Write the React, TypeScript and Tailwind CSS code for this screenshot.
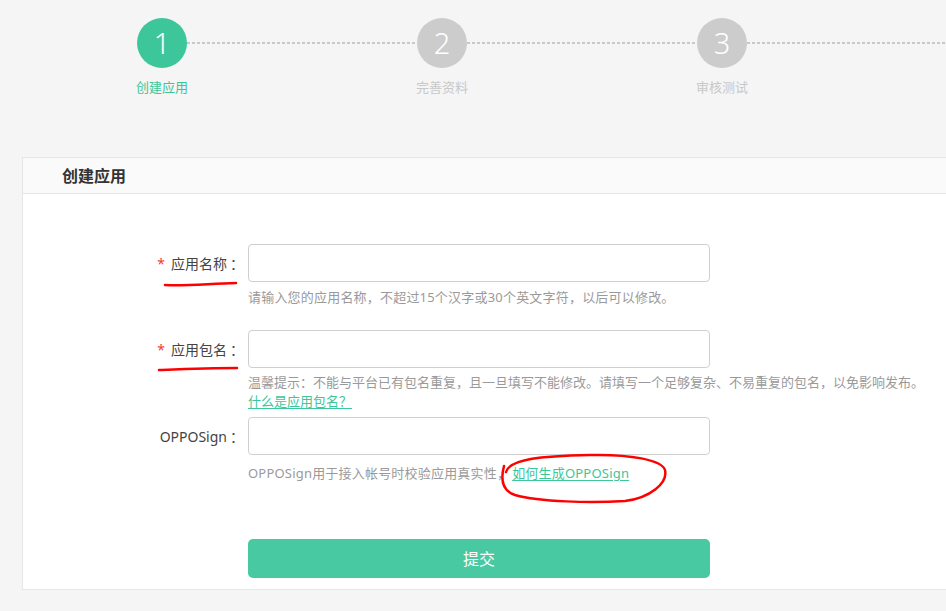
import React from "react";

const steps = [
  { n: "1", label: "创建应用", active: true },
  { n: "2", label: "完善资料", active: false },
  { n: "3", label: "审核测试", active: false },
];

const dash =
  "h-[2px] flex-1 bg-[repeating-linear-gradient(90deg,#c8c8c8_0px,#c8c8c8_3px,transparent_3px,transparent_5px)]";

function Steps() {
  return (
    <div className="flex h-[157px] pl-[22px] pt-[18px]">
      {steps.map((s, i) => (
        <div key={s.n} className="flex w-[280px] shrink-0 flex-col items-center">
          <div className="flex w-full items-center">
            <div className={i === 0 ? "h-[2px] flex-1" : dash} />
            <div
              className={`flex size-[50px] shrink-0 items-center justify-center rounded-full text-[29px] font-light text-white ${
                s.active ? "bg-[#3cc699]" : "bg-[#cccccc]"
              }`}
            >
              {s.n}
            </div>
            <div className={dash} />
          </div>
          <div
            className={`mt-[10px] text-[13px] leading-[18px] ${
              s.active ? "text-[#3cc699]" : "text-[#c8c8c8]"
            }`}
          >
            {s.label}
          </div>
        </div>
      ))}
      <div className="flex w-[280px] shrink-0 items-start">
        <div className={`${dash} mt-[24px]`} />
      </div>
    </div>
  );
}

function Field({
  label,
  required,
  children,
}: {
  label: string;
  required?: boolean;
  children?: React.ReactNode;
}) {
  return (
    <div className="flex">
      <div className="flex h-[38px] w-[225px] shrink-0 items-center justify-end pr-[4px] text-[14px] text-[#444]">
        {required && <span className="mr-[6px] text-[#f0402f]">*</span>}
        {label}
        <span className="ml-[3px]">：</span>
      </div>
      <div className="w-[462px] shrink-0">
        <input className="block h-[38px] w-full rounded-[4px] border border-[#cfcfcf] bg-white px-3 outline-none" />
        {children}
      </div>
    </div>
  );
}

export default function App() {
  return (
    <div className="relative h-[611px] overflow-hidden bg-[#f5f5f5] font-['Noto_Sans','Noto_Sans_CJK_SC',sans-serif]">
      <Steps />

      <div className="ml-[22px] w-[940px] border border-[#e6e6e6] bg-white">
        <div className="flex h-[36px] items-center border-b border-[#e6e6e6] bg-[#fafafa] pl-[39px] text-[16px] font-bold text-[#333]">
          创建应用
        </div>

        <div className="pb-[11px] pt-[50px]">
          <Field label="应用名称" required>
            <p className="mt-[5px] mb-[23px] text-[13px] leading-[20px] tracking-[0.2px] text-[#9a9a9a]">
              请输入您的应用名称，不超过15个汉字或30个英文字符，以后可以修改。
            </p>
          </Field>

          <Field label="应用包名" required>
            <p className="mt-[4px] whitespace-nowrap text-[13px] leading-[20px] text-[#9a9a9a]">
              温馨提示：不能与平台已有包名重复，且一旦填写不能修改。请填写一个足够复杂、不易重复的包名，以免影响发布。
            </p>
            <a className="mb-[6px] block text-[13px] leading-[19px] text-[#3cc699] underline underline-offset-2">
              什么是应用包名？
            </a>
          </Field>

          <Field label="OPPOSign">
            <p className="mt-[8px] whitespace-nowrap text-[13px] leading-[20px] tracking-[0.2px] text-[#9a9a9a]">
              OPPOSign用于接入帐号时校验应用真实性，
              <a className="ml-[2px] text-[#3cc699] underline underline-offset-2">如何生成OPPOSign</a>
            </p>
          </Field>

          <div className="ml-[225px] mt-[56px] w-[462px]">
            <button className="h-[39px] w-full rounded-[5px] bg-[#48c9a1] text-[16px] text-white">
              提交
            </button>
          </div>
        </div>
      </div>

      {/* red pen marks over the screenshot */}
      <svg
        className="pointer-events-none absolute inset-0"
        width="946"
        height="611"
        viewBox="0 0 946 611"
        fill="none"
        stroke="#ff0000"
        strokeWidth="2.5"
        strokeLinecap="round"
        strokeLinejoin="round"
      >
        <path d="M165 285 C185 286 205 284 236 283" />
        <path d="M159 370 C185 369 210 368 237 368" />
        <path d="M506 472 C510 459 540 456 590 455 C630 454 662 460 665 470 C668 483 650 498 625 501 C590 503 540 502 515 495 C503 491 500 481 504 466" />
      </svg>
    </div>
  );
}
